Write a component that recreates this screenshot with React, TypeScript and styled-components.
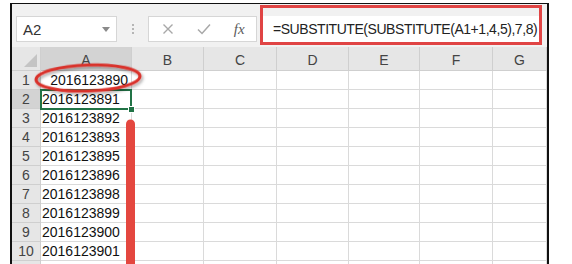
import React from "react";
import styled, { createGlobalStyle } from "styled-components";

const Global = createGlobalStyle`
  html, body { margin: 0; padding: 0; background: #ffffff; overflow: hidden; }
  body { width: 572px; height: 264px; font-family: "Liberation Sans", Arial, sans-serif; }
`;

const Frame = styled.div`
  position: relative;
  margin: 3px 0 0 10px;
  width: 535px;
  height: 270px;
  border-left: 2px solid #111;
  border-right: 2px solid #111;
  border-top: 1px solid #111;
  overflow: hidden;
`;

const Toolbar = styled.div`
  height: 43px;
  background: #f1f1f1;
  display: flex;
  align-items: flex-start;
  padding: 12px 0 0 4px;
  box-sizing: border-box;
`;

const Box = styled.div<{ $w: number }>`
  width: ${(p) => p.$w}px;
  height: 26px;
  background: #fff;
  border: 1px solid #d6d6d6;
  box-sizing: border-box;
  display: flex;
  align-items: center;
`;

const NameText = styled.span`
  font-size: 15px;
  color: #333;
  padding-left: 6px;
  flex: 1;
`;

const Caret = styled.span`
  width: 0;
  height: 0;
  border-left: 4px solid transparent;
  border-right: 4px solid transparent;
  border-top: 5px solid #8a8a8a;
  margin-right: 6px;
`;

const Dots = styled.div`
  width: 31px;
  height: 26px;
  display: flex;
  flex-direction: column;
  align-items: center;
  justify-content: center;
  gap: 2px;
  span {
    width: 2px;
    height: 2px;
    background: #b5b5b5;
  }
`;

const IconSlot = styled.div<{ $w: number }>`
  width: ${(p) => p.$w}px;
  display: flex;
  justify-content: center;
  align-items: center;
`;

const Fx = styled.span`
  font-family: "Liberation Serif", serif;
  font-style: italic;
  font-size: 15px;
  color: #5c5c5c;
`;

const Formula = styled.div`
  margin-left: 5px;
  width: 277px;
  height: 26px;
  background: #fff;
  box-sizing: border-box;
  display: flex;
  align-items: center;
  padding-left: 11px;
  font-size: 14px;
  letter-spacing: -0.45px;
  color: #222;
  white-space: nowrap;
`;

const RedBox = styled.div`
  position: absolute;
  left: 248px;
  top: 1px;
  width: 282px;
  height: 40px;
  border: 3px solid #e04444;
  box-sizing: border-box;
  pointer-events: none;
`;

const Grid = styled.div`
  display: grid;
  grid-template-columns: 29px 91px 72px 73px 72px 71px 73px 54px;
  grid-auto-rows: 19px;
  grid-template-rows: 24px;
`;

const Corner = styled.div`
  background: #e6e6e6;
  border-right: 1px solid #cfcfcf;
  border-bottom: 1px solid #cfcfcf;
  box-sizing: border-box;
  position: relative;
  &::after {
    content: "";
    position: absolute;
    right: 3px;
    bottom: 3px;
    width: 0;
    height: 0;
    border-left: 13px solid transparent;
    border-bottom: 13px solid #c4c4c4;
  }
`;

const ColHead = styled.div<{ $sel?: boolean }>`
  background: ${(p) => (p.$sel ? "#d3d3d3" : "#e6e6e6")};
  border-right: 1px solid #cfcfcf;
  border-bottom: 1px solid ${(p) => (p.$sel ? "#bdbdbd" : "#cfcfcf")};
  box-sizing: border-box;
  display: flex;
  align-items: center;
  justify-content: center;
  font-size: 14px;
  color: #444;
  padding-top: 2px;
`;

const RowHead = styled.div<{ $sel?: boolean }>`
  background: ${(p) => (p.$sel ? "#d3d3d3" : "#e6e6e6")};
  border-right: 1px solid #cfcfcf;
  border-bottom: 1px solid #cfcfcf;
  box-sizing: border-box;
  display: flex;
  align-items: center;
  justify-content: center;
  font-size: 14px;
  color: #444;
`;

const Cell = styled.div<{ $right?: boolean }>`
  background: #fff;
  border-right: 1px solid #dadada;
  border-bottom: 1px solid #dadada;
  box-sizing: border-box;
  display: flex;
  align-items: center;
  justify-content: ${(p) => (p.$right ? "flex-end" : "flex-start")};
  padding: 0 3px 0 1px;
  font-size: 14px;
  color: #111;
  white-space: nowrap;
`;

const Selection = styled.div`
  position: absolute;
  left: 28px;
  top: 85px;
  width: 92px;
  height: 21px;
  border: 2px solid #217346;
  box-sizing: border-box;
  pointer-events: none;
  &::after {
    content: "";
    position: absolute;
    right: -5px;
    bottom: -5px;
    width: 5px;
    height: 5px;
    background: #217346;
    border: 1px solid #fff;
  }
`;

const Overlay = styled.svg`
  position: absolute;
  left: 0;
  top: 0;
  pointer-events: none;
`;

const values = [
  "2016123890",
  "2016123891",
  "2016123892",
  "2016123893",
  "2016123895",
  "2016123896",
  "2016123898",
  "2016123899",
  "2016123900",
  "2016123901",
  "",
];

const cols = ["A", "B", "C", "D", "E", "F", "G"];

export default function App() {
  return (
    <>
      <Global />
      <Frame>
        <Toolbar>
          <Box $w={101}>
            <NameText>A2</NameText>
            <Caret />
          </Box>
          <Dots>
            <span />
            <span />
            <span />
          </Dots>
          <Box $w={109}>
            <IconSlot $w={38}>
              <svg width="12" height="12" viewBox="0 0 12 12">
                <path d="M1.5 1.5 L10.5 10.5 M10.5 1.5 L1.5 10.5" stroke="#a8a8a8" strokeWidth="1.4" />
              </svg>
            </IconSlot>
            <IconSlot $w={36}>
              <svg width="14" height="12" viewBox="0 0 14 12">
                <path d="M1 6.5 L5 10.5 L13 1.5" stroke="#a8a8a8" strokeWidth="1.5" fill="none" />
              </svg>
            </IconSlot>
            <IconSlot $w={34}>
              <Fx>fx</Fx>
            </IconSlot>
          </Box>
          <Formula>=SUBSTITUTE(SUBSTITUTE(A1+1,4,5),7,8)</Formula>
        </Toolbar>
        <Grid>
          <Corner />
          {cols.map((c) => (
            <ColHead key={c} $sel={c === "A"}>
              {c}
            </ColHead>
          ))}
          {values.map((v, i) => (
            <React.Fragment key={i}>
              <RowHead $sel={i === 1}>{i < 10 ? i + 1 : ""}</RowHead>
              <Cell $right={i === 0}>{v}</Cell>
              {cols.slice(1).map((c) => (
                <Cell key={c} />
              ))}
            </React.Fragment>
          ))}
        </Grid>
        <Selection />
        <RedBox />
        <Overlay width="535" height="270">
          <defs>
            <filter id="sh" x="-20%" y="-50%" width="140%" height="200%">
              <feDropShadow dx="1.5" dy="2" stdDeviation="1.5" floodColor="#000" floodOpacity="0.35" />
            </filter>
          </defs>
          <ellipse
            cx="76"
            cy="74"
            rx="52"
            ry="13"
            fill="none"
            stroke="#d9302c"
            strokeWidth="3"
            filter="url(#sh)"
            transform="rotate(-2 76 74)"
          />
          <path d="M114 274 L114 120 A4.5 4.5 0 0 1 123 120 L123 274 Z" fill="#e4473f" />
        </Overlay>
      </Frame>
    </>
  );
}
